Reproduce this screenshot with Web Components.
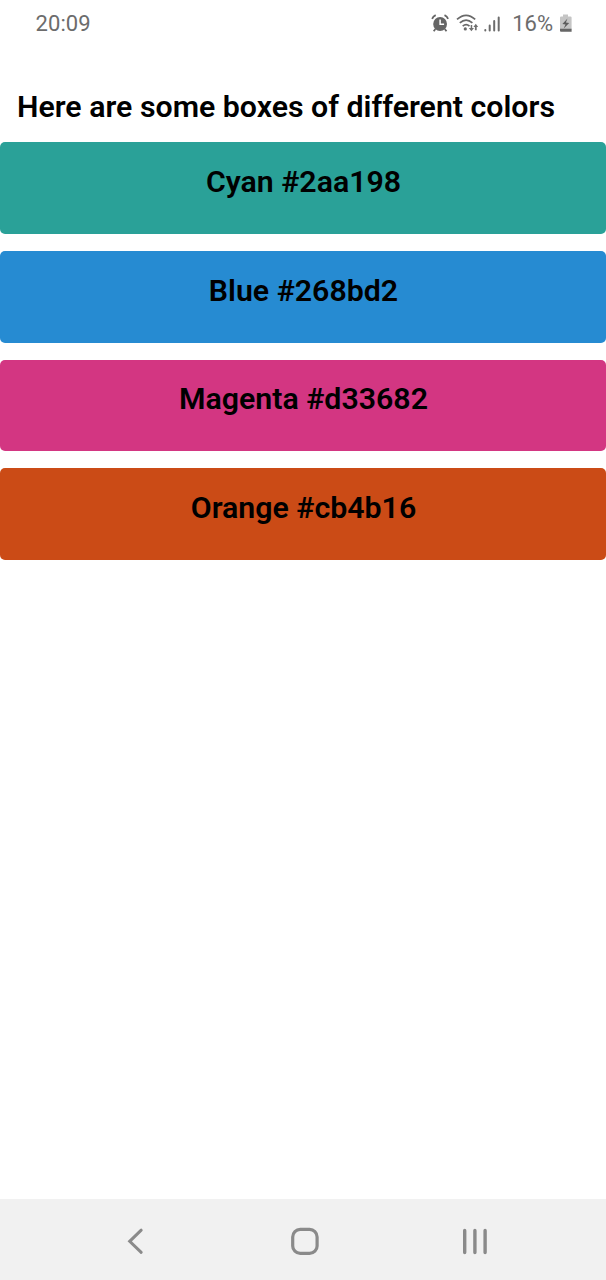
<!DOCTYPE html>
<html lang="en">
<head>
<meta charset="utf-8">
<title>Color boxes</title>
<style>
html,body{margin:0;height:100%;background:#fff}
body{font-family:Roboto,sans-serif;overflow:hidden}
</style>
</head>
<body>
<phone-screen>
  <status-bar slot="status" time="20:09" battery="16%"></status-bar>
  <page-heading>Here are some boxes of different colors</page-heading>
  <color-list>
    <color-box style="--box:#2aa198">Cyan #2aa198</color-box>
    <color-box style="--box:#268bd2">Blue #268bd2</color-box>
    <color-box style="--box:#d33682">Magenta #d33682</color-box>
    <color-box style="--box:#cb4b16">Orange #cb4b16</color-box>
  </color-list>
  <nav-bar slot="nav"></nav-bar>
</phone-screen>
<script>
const define = (name, html) => customElements.define(name, class extends HTMLElement {
  connectedCallback() {
    if (this.shadowRoot) return;
    this.attachShadow({ mode: 'open' }).innerHTML = html;
    this.shadowRoot.querySelectorAll('[data-attr]').forEach(e => {
      e.textContent = this.getAttribute(e.dataset.attr);
    });
  }
});

define('phone-screen', `
<style>
:host{display:flex;flex-direction:column;height:1280px;width:606px;background:#fff}
main{flex:1;min-height:0}
</style>
<slot name="status"></slot><main><slot></slot></main><slot name="nav"></slot>`);

define('status-bar', `
<style>
:host{display:flex;align-items:center;justify-content:space-between;box-sizing:border-box;height:47px;padding:0 33px 0 35.5px;color:#6c6c6c;font-size:22px;line-height:26px}
.time{letter-spacing:.1px}
.right{display:flex;align-items:center}
svg{display:block}
.pct{margin:0 6px 0 12px}
</style>
<span class="time" data-attr="time"></span>
<div class="right">
  <svg width="70" height="20" viewBox="430.2 13.4 70 20">
    <circle cx="440.3" cy="23.4" r="6.9" fill="#656565"/>
    <path d="M435.6 28.4l-1.7 2.3M445 28.4l1.7 2.3M432.3 18.2q1-2.5 3.6-3.7M448.3 18.2q-1-2.5-3.6-3.7" fill="none" stroke="#656565" stroke-width="1.8"/>
    <path d="M440.3 19v4.7h4" fill="none" stroke="#fff" stroke-width="1.5"/>
    <g fill="none" stroke="#696969" stroke-width="1.7">
      <path d="M457.2 18.8q9.1-8.2 18.2 0M460 22.3q6.3-5.6 12.6 0M462.9 25.5q3.4-2.9 6.8 0"/>
    </g>
    <circle cx="465.5" cy="28.3" r="1.6" fill="#696969"/>
    <path d="M470.9 24.5v3h-1.9l2.6 3.2 2.6-3.2h-1.8v-3zM475.1 29.7v-3.400h-1.500l2.400-3.200 2.400 3.200h-1.500v3.400z" fill="#707070"/>
    <g stroke="#6c6c6c" stroke-width="2" stroke-linecap="round"><path d="M485.500 29.500v.5M489.900 25v5M494.400 20.500v9.500M498.900 16.800v13.200"/></g>
  </svg>
  <span class="pct" data-attr="battery"></span>
  <svg width="14" height="20" viewBox="559 13.500 14 20">
    <path d="M563 14h5v2h2.500q1.100 0 1.100 1.100V29H560V17.100q0-1.100 1.100-1.100H563z" fill="#c5c5c5"/>
    <path d="M560 28.300h11.600v2.900H561q-1 0-1-1z" fill="#666"/>
    <path d="M567.500 18l-5.100 5.500 3.100.5-1.800 4 5.500-5.500-3.300-.6z" fill="#5e5e5e"/>
  </svg>
</div>`);

define('page-heading', `
<style>
:host{display:block;padding:42px 17px 17.3px;font-weight:600;font-size:30.3px;line-height:36px;color:#000;white-space:nowrap}
</style><slot></slot>`);

define('color-list', `
<style>:host{display:flex;flex-direction:column;gap:17px}</style><slot></slot>`);

define('color-box', `
<style>
:host{display:block;box-sizing:border-box;height:91.7px;padding:21.6px 0 0 1px;border-radius:5px;background:var(--box);text-align:center;font-weight:600;font-size:30.3px;line-height:36px;color:#000}
</style><slot></slot>`);

define('nav-bar', `
<style>:host{display:block;height:81px;background:#f1f1f1}svg{display:block}</style>
<svg width="606" height="81" viewBox="0 1199 606 81" fill="none" stroke="#8a8a8a" stroke-width="3">
  <path d="M141.200 1230.200L129.700 1241.300L141.200 1252.300" stroke-linecap="round"/>
  <rect x="292.700" y="1229.400" width="24.400" height="24" rx="7.500" stroke-width="3.200"/>
  <path d="M464.700 1230.500v22M474.900 1230.500v22M485.100 1230.500v22" stroke-linecap="round" stroke-width="3.400"/>
</svg>`);
</script>
</body>
</html>
